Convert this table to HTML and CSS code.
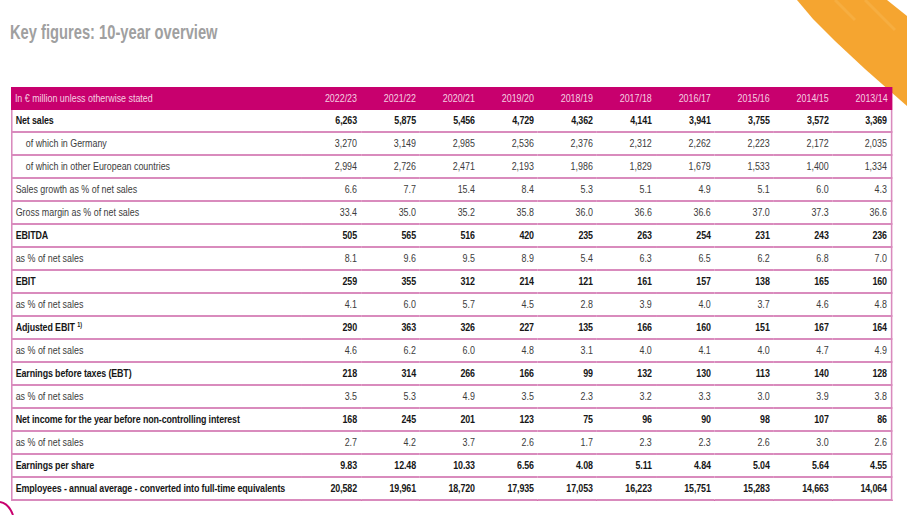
FILE: index.html
```html
<!DOCTYPE html>
<html lang="en">
<head>
<meta charset="utf-8">
<title>Key figures: 10-year overview</title>
<link rel="stylesheet" href="styles.css">
</head>
<body>
<div class="page">
  <svg class="brush-orange" width="112" height="110" viewBox="0 0 112 110" aria-hidden="true">
    <path d="M2 0 L92 0 L97 4 L112 16 L112 106 L104 99 L70 69 L40 41 L18 19 Z" fill="#f5a530"/>
    <path d="M40 0 L60 20 M70 0 L100 30" stroke="#f8b44c" stroke-width="3" opacity="0.6"/>
  </svg>
  <svg class="brush-pink" width="20" height="16" viewBox="0 0 20 16" aria-hidden="true">
    <path d="M0 3 C6 4 10 8 13 16" stroke="#c8006e" stroke-width="2" fill="none"/>
  </svg>

  <h1 class="title">Key figures: 10-year overview</h1>

  <table class="figures">
    <colgroup>
      <col class="c-label">
      <col class="c-year"><col class="c-year"><col class="c-year"><col class="c-year"><col class="c-year">
      <col class="c-year"><col class="c-year"><col class="c-year"><col class="c-year"><col class="c-year">
    </colgroup>
    <thead>
      <tr>
        <th class="label">In € million unless otherwise stated</th>
        <th>2022/23</th><th>2021/22</th><th>2020/21</th><th>2019/20</th><th>2018/19</th>
        <th>2017/18</th><th>2016/17</th><th>2015/16</th><th>2014/15</th><th>2013/14</th>
      </tr>
    </thead>
    <tbody>
      <tr class="strong"><td class="label">Net sales</td><td>6,263</td><td>5,875</td><td>5,456</td><td>4,729</td><td>4,362</td><td>4,141</td><td>3,941</td><td>3,755</td><td>3,572</td><td>3,369</td></tr>
      <tr><td class="label indent">of which in Germany</td><td>3,270</td><td>3,149</td><td>2,985</td><td>2,536</td><td>2,376</td><td>2,312</td><td>2,262</td><td>2,223</td><td>2,172</td><td>2,035</td></tr>
      <tr><td class="label indent">of which in other European countries</td><td>2,994</td><td>2,726</td><td>2,471</td><td>2,193</td><td>1,986</td><td>1,829</td><td>1,679</td><td>1,533</td><td>1,400</td><td>1,334</td></tr>
      <tr><td class="label">Sales growth as % of net sales</td><td>6.6</td><td>7.7</td><td>15.4</td><td>8.4</td><td>5.3</td><td>5.1</td><td>4.9</td><td>5.1</td><td>6.0</td><td>4.3</td></tr>
      <tr><td class="label">Gross margin as % of net sales</td><td>33.4</td><td>35.0</td><td>35.2</td><td>35.8</td><td>36.0</td><td>36.6</td><td>36.6</td><td>37.0</td><td>37.3</td><td>36.6</td></tr>
      <tr class="strong"><td class="label">EBITDA</td><td>505</td><td>565</td><td>516</td><td>420</td><td>235</td><td>263</td><td>254</td><td>231</td><td>243</td><td>236</td></tr>
      <tr><td class="label">as % of net sales</td><td>8.1</td><td>9.6</td><td>9.5</td><td>8.9</td><td>5.4</td><td>6.3</td><td>6.5</td><td>6.2</td><td>6.8</td><td>7.0</td></tr>
      <tr class="strong"><td class="label">EBIT</td><td>259</td><td>355</td><td>312</td><td>214</td><td>121</td><td>161</td><td>157</td><td>138</td><td>165</td><td>160</td></tr>
      <tr><td class="label">as % of net sales</td><td>4.1</td><td>6.0</td><td>5.7</td><td>4.5</td><td>2.8</td><td>3.9</td><td>4.0</td><td>3.7</td><td>4.6</td><td>4.8</td></tr>
      <tr class="strong"><td class="label">Adjusted EBIT <sup class="note">1)</sup></td><td>290</td><td>363</td><td>326</td><td>227</td><td>135</td><td>166</td><td>160</td><td>151</td><td>167</td><td>164</td></tr>
      <tr><td class="label">as % of net sales</td><td>4.6</td><td>6.2</td><td>6.0</td><td>4.8</td><td>3.1</td><td>4.0</td><td>4.1</td><td>4.0</td><td>4.7</td><td>4.9</td></tr>
      <tr class="strong"><td class="label">Earnings before taxes (EBT)</td><td>218</td><td>314</td><td>266</td><td>166</td><td>99</td><td>132</td><td>130</td><td>113</td><td>140</td><td>128</td></tr>
      <tr><td class="label">as % of net sales</td><td>3.5</td><td>5.3</td><td>4.9</td><td>3.5</td><td>2.3</td><td>3.2</td><td>3.3</td><td>3.0</td><td>3.9</td><td>3.8</td></tr>
      <tr class="strong"><td class="label">Net income for the year before non-controlling interest</td><td>168</td><td>245</td><td>201</td><td>123</td><td>75</td><td>96</td><td>90</td><td>98</td><td>107</td><td>86</td></tr>
      <tr><td class="label">as % of net sales</td><td>2.7</td><td>4.2</td><td>3.7</td><td>2.6</td><td>1.7</td><td>2.3</td><td>2.3</td><td>2.6</td><td>3.0</td><td>2.6</td></tr>
      <tr class="strong"><td class="label">Earnings per share</td><td>9.83</td><td>12.48</td><td>10.33</td><td>6.56</td><td>4.08</td><td>5.11</td><td>4.84</td><td>5.04</td><td>5.64</td><td>4.55</td></tr>
      <tr class="strong"><td class="label">Employees - annual average - converted into full-time equivalents</td><td>20,582</td><td>19,961</td><td>18,720</td><td>17,935</td><td>17,053</td><td>16,223</td><td>15,751</td><td>15,283</td><td>14,663</td><td>14,064</td></tr>
    </tbody>
  </table>
</div>
</body>
</html>
```

FILE: styles.css
```css
html, body {
  margin: 0;
  padding: 0;
  background: #ffffff;
}

.page {
  position: relative;
  width: 907px;
  height: 515px;
  overflow: hidden;
  padding: 20px 0 0 0;
  box-sizing: border-box;
  font-family: "Liberation Sans", Arial, sans-serif;
}

.brush-orange {
  position: absolute;
  top: 0;
  right: 0;
}

.brush-pink {
  position: absolute;
  left: 0;
  bottom: 0;
}

/* the print face is a condensed grotesque: narrow the metric-compatible sans */
.title {
  display: inline-block;
  margin: 0 0 43px 10px;
  font-size: 21px;
  line-height: 24px;
  font-weight: 700;
  color: #a0a0a0;
  transform: scaleX(0.7);
  transform-origin: left top;
  white-space: nowrap;
}

.figures {
  margin-left: 11px;
  width: 1128px;
  table-layout: fixed;
  border-collapse: collapse;
  font-size: 11.4px;
  color: #3c3c3c;
  background: linear-gradient(#c8006e 0, #c8006e 23px, #ffffff 23px);
  transform: scaleX(0.78);
  transform-origin: left top;
}

.c-label {
  width: 372px;
}

.c-year {
  width: 75.6px;
}

.figures th,
.figures td {
  height: 21px;
  padding: 0 5px 0 4px;
  text-align: right;
  white-space: nowrap;
  line-height: 13px;
  border-bottom: 2px solid #d98bbd;
}

.figures thead th {
  color: #f5cfe1;
  font-weight: 400;
  border-bottom: 0;
  height: 23px;
}

.figures tbody tr td:first-child {
  border-left: 2.5px solid #d98bbd;
}

.figures tbody tr td:last-child {
  border-right: 2.5px solid #d98bbd;
}

.figures .label {
  text-align: left;
}

.figures .indent {
  padding-left: 17px;
}

.figures .strong td {
  font-weight: 700;
  color: #161616;
  letter-spacing: -0.15px;
}

.note {
  font-size: 7px;
  line-height: 0;
  vertical-align: 4px;
}
```
